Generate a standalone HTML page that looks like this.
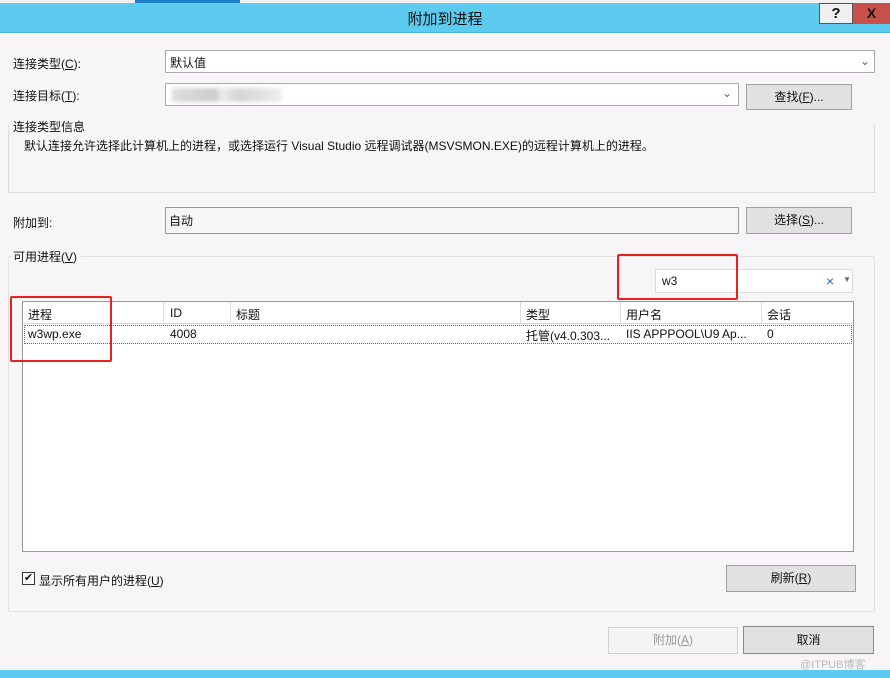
<!DOCTYPE html><html><head><meta charset="utf-8"><style>
*{box-sizing:border-box;margin:0;padding:0}
body{width:890px;height:678px;overflow:hidden;background:#f8f5f8;font-family:"Liberation Sans","Noto Sans CJK SC",sans-serif;font-size:12px;color:#111;position:relative}
.a{position:absolute}
.box{position:absolute;background:#fff;border:1px solid #aaa}
.btn{position:absolute;background:#e1e1e1;border:1px solid #a0a0a0;text-align:center}
.red{position:absolute;border:2px solid #e82020;border-radius:2px}
u{text-decoration:underline}
</style></head><body>
<div class="a" style="left:0;top:0;width:890px;height:3px;background:#f0f0f0"></div>
<div class="a" style="left:135px;top:0;width:105px;height:3px;background:#1e80c8"></div>
<div class="a" style="left:0;top:3px;width:890px;height:30px;background:#5ccbef;border-bottom:1px solid #4ab0d8"></div>
<div class="a" style="left:0;top:8px;width:890px;text-align:center;font-size:15px">附加到进程</div>
<div class="a" style="left:819px;top:3px;width:34px;height:21px;background:#f0f0f0;border:1px solid #555;text-align:center;font-weight:bold;font-size:15px;line-height:19px">?</div>
<div class="a" style="left:853px;top:3px;width:37px;height:21px;background:#c7514a;text-align:center;font-weight:bold;font-size:14px;line-height:21px;color:#111">X</div>

<div class="a" style="left:13px;top:55px">连接类型(<u>C</u>):</div>
<div class="box" style="left:165px;top:50px;width:710px;height:23px;padding:3px 4px">默认值<span class="a" style="right:4px;top:3px;color:#666">⌄</span></div>
<div class="a" style="left:13px;top:87px">连接目标(<u>T</u>):</div>
<div class="box" style="left:165px;top:83px;width:574px;height:23px"><div class="a" style="left:6px;top:4px;width:110px;height:14px;background:linear-gradient(90deg,#ddd,#ccc 40%,#eee 45%,#d4d4d4 60%,#eee);filter:blur(2px)"></div><span class="a" style="right:6px;top:2px;color:#666">⌄</span></div>
<div class="btn" style="left:746px;top:84px;width:106px;height:26px;line-height:24px">查找(<u>F</u>)...</div>

<div class="a" style="left:8px;top:125px;width:867px;height:68px;border:1px solid #ddd;border-top:none"></div>
<div class="a" style="left:13px;top:118px">连接类型信息</div>
<div class="a" style="left:24px;top:137px">默认连接允许选择此计算机上的进程，或选择运行 Visual Studio 远程调试器(MSVSMON.EXE)的远程计算机上的进程。</div>

<div class="a" style="left:13px;top:214px">附加到:</div>
<div class="a" style="left:165px;top:207px;width:574px;height:27px;background:#f8f5f8;border:1px solid #999;padding:4px 3px">自动</div>
<div class="btn" style="left:746px;top:207px;width:106px;height:27px;line-height:25px">选择(<u>S</u>)...</div>

<div class="a" style="left:8px;top:256px;width:867px;height:356px;border:1px solid #e2e2e2;border-radius:2px"></div>
<div class="a" style="left:13px;top:248px;background:#f8f5f8;padding-right:4px">可用进程(<u>V</u>)</div>
<div class="box" style="left:655px;top:269px;width:198px;height:24px;border-color:#ddd;padding:4px 6px">w3<span class="a" style="left:170px;top:3px;color:#1a6fc8;font-size:14px">×</span><span class="a" style="left:187px;top:5px;color:#666;font-size:8px">▼</span></div>

<div class="box" style="left:22px;top:301px;width:832px;height:251px;border-color:#999"></div>
<div class="a" style="left:23px;top:302px;width:830px;height:22px;background:#fff;border-bottom:1px solid #ddd"></div>
<div class="a" style="left:28px;top:306px">进程</div>
<div class="a" style="left:163px;top:302px;width:1px;height:22px;background:#ddd"></div>
<div class="a" style="left:170px;top:306px">ID</div>
<div class="a" style="left:230px;top:302px;width:1px;height:22px;background:#ddd"></div>
<div class="a" style="left:236px;top:306px">标题</div>
<div class="a" style="left:520px;top:302px;width:1px;height:22px;background:#ddd"></div>
<div class="a" style="left:526px;top:306px">类型</div>
<div class="a" style="left:620px;top:302px;width:1px;height:22px;background:#ddd"></div>
<div class="a" style="left:626px;top:306px">用户名</div>
<div class="a" style="left:761px;top:302px;width:1px;height:22px;background:#ddd"></div>
<div class="a" style="left:767px;top:306px">会话</div>
<div class="a" style="left:24px;top:325px;width:828px;height:19px;border:1px dotted #666"></div>
<div class="a" style="left:28px;top:327px">w3wp.exe</div>
<div class="a" style="left:170px;top:327px">4008</div>
<div class="a" style="left:526px;top:327px">托管(v4.0.303...</div>
<div class="a" style="left:626px;top:327px">IIS APPPOOL\U9 Ap...</div>
<div class="a" style="left:767px;top:327px">0</div>

<div class="red" style="left:617px;top:254px;width:121px;height:46px"></div>
<div class="red" style="left:10px;top:296px;width:102px;height:66px"></div>

<div class="a" style="left:22px;top:572px;width:13px;height:13px;border:1px solid #333;background:#fff;font-size:11px;line-height:11px;text-align:center">✔</div>
<div class="a" style="left:39px;top:572px">显示所有用户的进程(<u>U</u>)</div>
<div class="btn" style="left:726px;top:565px;width:130px;height:27px;line-height:25px">刷新(<u>R</u>)</div>

<div class="a" style="left:608px;top:627px;width:130px;height:27px;border:1px solid #d0d0d0;background:#f5f5f5;color:#999;text-align:center;line-height:25px">附加(<u>A</u>)</div>
<div class="btn" style="left:743px;top:626px;width:131px;height:28px;line-height:26px;border-color:#888">取消</div>
<div class="a" style="left:800px;top:656px;color:#bbb;font-size:11px">@ITPUB博客</div>
<div class="a" style="left:0;top:670px;width:890px;height:8px;background:#5ccbef"></div>
</body></html>
